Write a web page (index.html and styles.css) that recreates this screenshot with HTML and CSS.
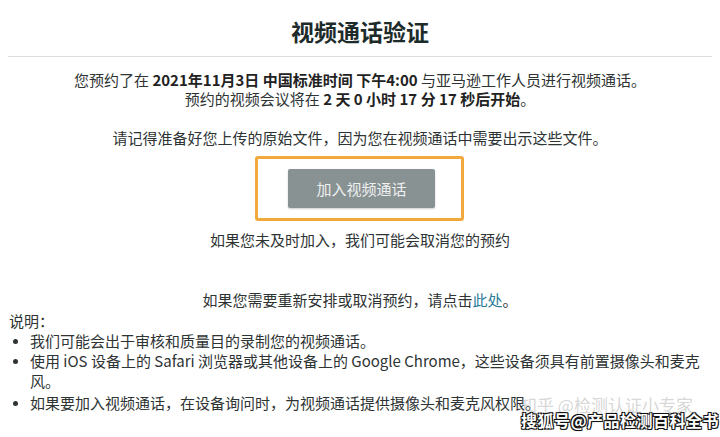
FILE: index.html
```html
<!DOCTYPE html>
<html lang="zh-CN">
  <head>
    <meta charset="utf-8">
    <link rel="stylesheet" href="styles.css">
  </head>
  <body>
    <div id="page">
      <h1 class="title">视频通话验证</h1>
      <hr class="rule">
      <p class="intro">
        您预约了在 <b>2021年11月3日 中国标准时间 下午4:00</b> 与亚马逊工作人员进行视频通话。<br>
        预约的视频会议将在 <b>2 天 0 小时 17 分 17 秒后开始</b>。
      </p>
      <p class="remind">请记得准备好您上传的原始文件，因为您在视频通话中需要出示这些文件。</p>
      <div class="highlight">
        <button class="join" type="button">加入视频通话</button>
      </div>
      <p class="late">如果您未及时加入，我们可能会取消您的预约</p>
      <p class="resched">如果您需要重新安排或取消预约，请点击<a href="#">此处</a>。</p>
      <div class="notes">
        <div class="notes-head">说明：</div>
        <ul class="notes-list">
          <li>我们可能会出于审核和质量目的录制您的视频通话。</li>
          <li>使用 iOS 设备上的 Safari 浏览器或其他设备上的 Google Chrome，这些设备须具有前置摄像头和麦克风。</li>
          <li>如果要加入视频通话，在设备询问时，为视频通话提供摄像头和麦克风权限。</li>
        </ul>
      </div>
      <div class="mark-zhihu">知乎 @检测认证小专家</div>
      <div class="mark-sohu">搜狐号@产品检测百科全书</div>
    </div>
  </body>
</html>
```
FILE: styles.css
```css
body { margin:0; background:white; color:#2e3333; font:15px "Noto Sans CJK SC","Noto Sans",sans-serif; }
#page { position:relative; width:720px; height:437px; overflow:hidden; }
.title { margin:0; padding-top:16px; text-align:center; font-size:23px; line-height:30px; font-weight:bold; color:#1d2b2b; }
.rule { margin:10px 8px 0; border:0; border-top:1px solid #dedede; height:0; }
.intro { margin:13px 0 0; text-align:center; line-height:19px; }
.intro b { font-weight:bold; color:#222; }
.remind { margin:20px 0 0; text-align:center; line-height:19px; }
.highlight {
  width:199px; height:59px; margin:9px 0 0 255px; border:3px solid #f2a93b; border-radius:3px;
  display:flex; align-items:center; justify-content:center; padding-left:4px; box-sizing:content-box; }
.join {
  width:147px; height:39px; border:0; border-radius:2px; background:#889293; color:#eef0f0;
  font:15px "Noto Sans CJK SC",sans-serif; box-shadow:0 1px 2px rgba(0,0,0,.2); }
.late { margin:9px 0 0; text-align:center; line-height:19px; }
.resched { margin:41px 0 0; text-align:center; line-height:19px; }
.resched a { color:#2a7c98; text-decoration:none; }
.notes { margin:2px 0 0 9px; }
.notes-head { line-height:20px; }
.notes-list { margin:0; padding:0 0 0 21px; width:670px; line-height:20px; }
.notes-list li:last-child { margin-top:2px; }
.notes-list li::marker { font-size:13px; }
.mark-zhihu {
  position:absolute; left:520px; top:395px; font-size:17px; line-height:20px; color:rgba(150,150,150,.4);
  white-space:nowrap; }
.mark-sohu {
  position:absolute; left:521px; top:411px; font-size:16px; line-height:18px; font-weight:bold; color:white;
  white-space:nowrap; letter-spacing:.5px;
  text-shadow:-1px -1px 0 #111, 1px -1px 0 #111, -1px 1px 0 #111, 1px 1px 0 #111, 0 0 2px #000; }
```
